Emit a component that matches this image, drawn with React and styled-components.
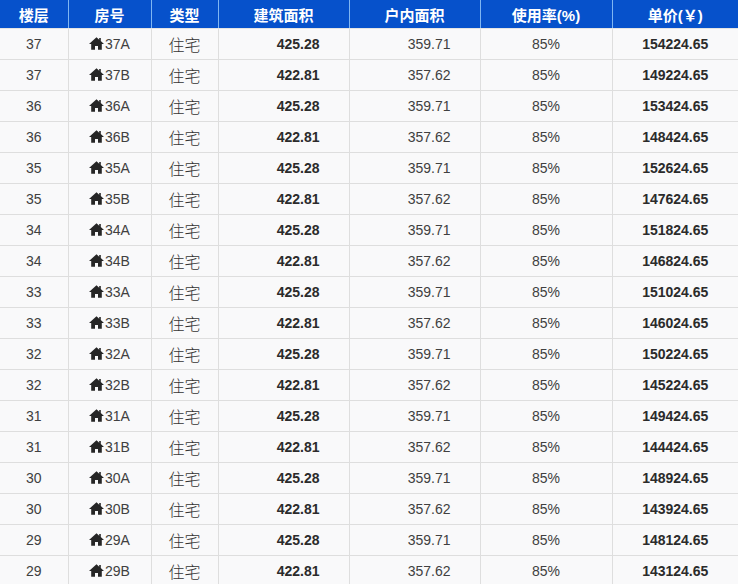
import React from "react";
import styled, { createGlobalStyle } from "styled-components";

const Global = createGlobalStyle`
  html, body { margin: 0; padding: 0; background: #ffffff; }
  body { font-family: "Liberation Sans", Arial, "Noto Sans CJK SC", sans-serif; }
`;

const Table = styled.table`
  width: 738px;
  border-collapse: collapse;
  table-layout: fixed;
  font-size: 14px;
  color: #333333;
`;

const HeadCell = styled.th`
  height: 28px;
  padding: 0;
  background: #0651cb;
  color: #ffffff;
  font-weight: bold;
  font-size: 15px;
  text-align: center;
  border-left: 1px solid #7fb6f2;
  border-bottom: 1px solid #e4e4e4;
  &:first-child { border-left: none; }
`;

const Row = styled.tr`
  background: #f9f9fa;
`;

const Cell = styled.td`
  height: 30px;
  padding: 0 ${(p) => (p.$align === "right" ? "29px" : "0")} 0 0;
  text-align: ${(p) => p.$align || "center"};
  font-weight: ${(p) => (p.$bold ? "bold" : "normal")};
  color: ${(p) => (p.$bold ? "#2b2b2b" : "#404040")};
  border-left: 1px solid #dedede;
  border-bottom: 1px solid #dedede;
  white-space: nowrap;
  &:first-child { border-left: none; }
`;

const TypeText = styled.span`
  font-size: 16px;
  font-weight: 300;
  color: #333333;
  vertical-align: 1px;
`;

const Icon = styled.svg`
  vertical-align: -1px;
  margin-right: 1px;
`;

const HouseIcon = () => (
  <Icon width="15" height="13" viewBox="0 0 15 13" aria-hidden="true">
    <path d="M7.5 0.3 L0 7 L2.2 7 L2.2 12.8 L6 12.8 L6 9 L9 9 L9 12.8 L12.8 12.8 L12.8 7 L15 7 L11.8 4.1 L11.8 1 L10.2 1 L10.2 2.7 Z" fill="#262626" />
  </Icon>
);

const widths = [68, 83, 67, 131, 131, 132, 126];
const headers = ["楼层", "房号", "类型", "建筑面积", "户内面积", "使用率(%)", "单价(￥)"];

const rows = [];
const pricesA = [154224.65, 153424.65, 152624.65, 151824.65, 151024.65, 150224.65, 149424.65, 148924.65, 148124.65];
const pricesB = [149224.65, 148424.65, 147624.65, 146824.65, 146024.65, 145224.65, 144424.65, 143924.65, 143124.65];
for (let i = 0; i < 9; i++) {
  const floor = 37 - i;
  rows.push({ floor, room: `${floor}A`, area: "425.28", inner: "359.71", price: pricesA[i].toFixed(2) });
  rows.push({ floor, room: `${floor}B`, area: "422.81", inner: "357.62", price: pricesB[i].toFixed(2) });
}

export default function App() {
  return (
    <>
      <Global />
      <Table>
        <colgroup>
          {widths.map((w, i) => (
            <col key={i} style={{ width: w }} />
          ))}
        </colgroup>
        <thead>
          <tr>
            {headers.map((h) => (
              <HeadCell key={h}>{h}</HeadCell>
            ))}
          </tr>
        </thead>
        <tbody>
          {rows.map((r) => (
            <Row key={r.room}>
              <Cell>{r.floor}</Cell>
              <Cell>
                <HouseIcon />
                {r.room}
              </Cell>
              <Cell>
                <TypeText>住宅</TypeText>
              </Cell>
              <Cell $align="right" $bold>{r.area}</Cell>
              <Cell $align="right">{r.inner}</Cell>
              <Cell>85%</Cell>
              <Cell $bold>{r.price}</Cell>
            </Row>
          ))}
        </tbody>
      </Table>
    </>
  );
}
